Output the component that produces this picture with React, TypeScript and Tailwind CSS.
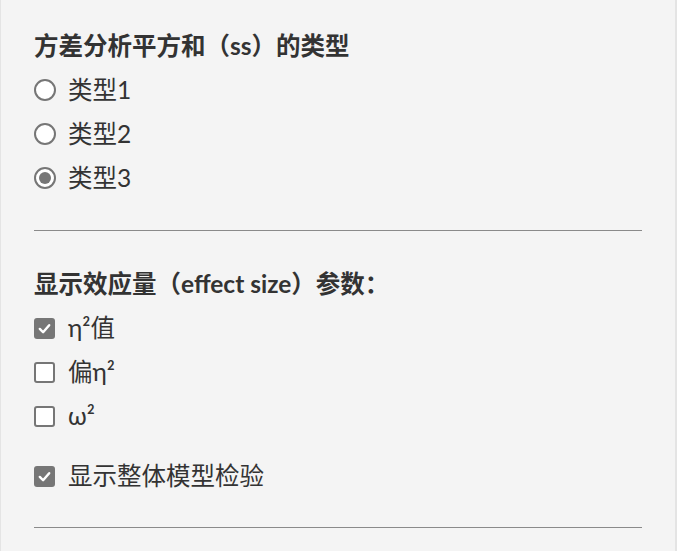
import React from "react";

const font = { fontFamily: 'Lato, "Noto Sans CJK SC", sans-serif' };

function Radio({ checked, label }: { checked?: boolean; label: string }) {
  return (
    <div className="flex h-[44px] items-center">
      <span className="flex h-[22px] w-[22px] items-center justify-center rounded-full border-2 border-[#767676] bg-white">
        {checked && <span className="h-[12px] w-[12px] rounded-full bg-[#767676]" />}
      </span>
      <span className="ml-[12px] text-[24.5px] leading-none text-[#333]">{label}</span>
    </div>
  );
}

function Check({ checked, label }: { checked?: boolean; label: string }) {
  return (
    <div className="flex h-[44px] items-center">
      {checked ? (
        <span className="flex h-[21px] w-[21px] items-center justify-center rounded-[3px] bg-[#767676]">
          <svg width="15" height="15" viewBox="0 0 16 16">
            <path d="M3 8.5 L6.5 12 L13 4.5" fill="none" stroke="white" strokeWidth="2.6" strokeLinecap="round" strokeLinejoin="round" />
          </svg>
        </span>
      ) : (
        <span className="h-[21px] w-[21px] rounded-[3px] border-2 border-[#767676] bg-white" />
      )}
      <span className="ml-[13px] text-[24.5px] leading-none text-[#333]">{label}</span>
    </div>
  );
}

export default function App() {
  return (
    <div className="h-[551px] w-[684px] bg-white" style={font}>
      <div className="h-[551px] w-[677px] border-l border-r-2 border-[#e4e4e4] bg-[#f4f4f4] pl-[33px] pt-[24px]">
        <div className="flex h-[44px] items-center text-[24.5px] font-bold leading-none text-[#333]">
          方差分析平方和（ss）的类型
        </div>
        <Radio label="类型1" />
        <Radio label="类型2" />
        <Radio checked label="类型3" />
        <div className="mt-[30px] h-px w-[608px] bg-[#8a8a8a]" />
        <div className="mt-[31px] flex h-[44px] items-center text-[24.5px] font-bold leading-none text-[#333]">
          显示效应量（effect size）参数：
        </div>
        <Check checked label="η²值" />
        <Check label="偏η²" />
        <Check label="ω²" />
        <div className="mt-[16px]">
          <Check checked label="显示整体模型检验" />
        </div>
        <div className="mt-[29px] h-px w-[608px] bg-[#8a8a8a]" />
      </div>
    </div>
  );
}
